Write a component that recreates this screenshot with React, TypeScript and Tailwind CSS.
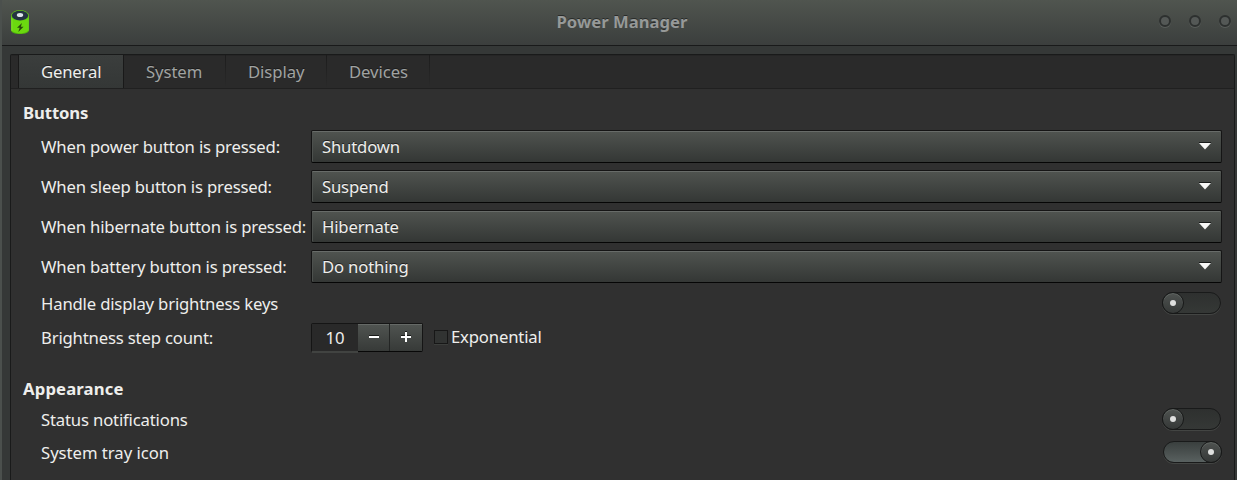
import { useState } from "react";

const selects = [
  { label: "When power button is pressed:", value: "Shutdown" },
  { label: "When sleep button is pressed:", value: "Suspend" },
  { label: "When hibernate button is pressed:", value: "Hibernate" },
  { label: "When battery button is pressed:", value: "Do nothing" },
];

const tabs = [
  { name: "General", width: "w-[106px] pl-[22px]" },
  { name: "System", width: "w-[102px] pl-[22px]" },
  { name: "Display", width: "w-[101px] pl-[22px]" },
  { name: "Devices", width: "w-[103px] pl-[22px]" },
];

function BatteryIcon() {
  return (
    <svg width="20" height="26" viewBox="0 0 20 26" className="block">
      <path d="M1 6.500v14.500c0 2.600 4 4 9 4s9-1.400 9-4V6.500z" fill="#53b80c" />
      <path d="M2.200 7v14c0 2 3.500 3.200 7.800 3.200s7.800-1.200 7.800-3.200V7z" fill="#6bd90f" />
      <path d="M1.500 8v13c0 .5.300 1 .8 1.400V9z" fill="#96f03f" />
      <path d="M18.500 8v13c0 .5-.3 1-.8 1.400V9z" fill="#7be02a" />
      <ellipse cx="10" cy="6.600" rx="9" ry="5.500" fill="#66d010" />
      <ellipse cx="10" cy="6.600" rx="8.200" ry="4.900" fill="#243442" />
      <ellipse cx="10" cy="6" rx="3.200" ry="2" fill="#dce4e8" />
      <path d="M12 14l-5 4.700h2.700L8.300 23l5.200-5.200h-2.700z" fill="#29460e" />
    </svg>
  );
}

function WindowButton() {
  return (
    <span className="block size-3 shrink-0 rounded-full border-2 border-[#2d302f] bg-[#545856] shadow-[0_1px_0_#595d5a]" />
  );
}

function Select({ value }: { value: string }) {
  return (
    <button className="flex h-[33px] w-[911px] items-center justify-between rounded-[2px] border border-[#151515] border-b-[#050505] bg-linear-to-b from-[#505450] to-[#343735] pr-[10px] pl-[10px] text-[#eeeeec] shadow-[inset_0_1px_0_#686c69,inset_1px_0_0_#4d514e] [text-shadow:0_-1px_0_#202020]">
      <span>{value}</span>
      <svg width="12" height="8" viewBox="0 0 12 8" className="mb-0.5">
        <path d="M0 0h12v1H0z" fill="#181a19" />
        <path d="M0 1h12L6 7.500z" fill="#f8f8f7" />
      </svg>
    </button>
  );
}

function Switch({ initial, label }: { initial: boolean; label: string }) {
  const [on, setOn] = useState(initial);
  return (
    <button
      role="switch"
      aria-checked={on}
      aria-label={label}
      onClick={() => setOn(!on)}
      className={
        "mb-0.5 flex h-[22px] w-[60px] items-center " + (on ? "justify-end" : "")
      }
    >
      <span
        className={
          "flex h-[22px] w-[59px] items-center rounded-full border border-[#191a1a] shadow-[0_1px_0_#434543] " +
          (on
            ? "justify-end bg-linear-to-b from-[#3a3f3e] to-[#596160]"
            : "bg-linear-to-b from-[#2e302f] to-[#353836]")
        }
      >
        <span
          className={
            "flex size-[22px] shrink-0 items-center justify-center rounded-full border border-[#171818] bg-linear-to-b from-[#4f5351] to-[#353837] shadow-[inset_0_1px_0_#616663] " +
            (on ? "-mr-px" : "-ml-px")
          }
        >
          <span className="size-1.5 rounded-full bg-[#dedfde]" />
        </span>
      </span>
    </button>
  );
}

export default function App() {
  const [active, setActive] = useState("General");
  const [count, setCount] = useState(10);
  return (
    <div className="flex h-[480px] w-[1237px] flex-col overflow-hidden bg-[#353837] font-['Noto_Sans',sans-serif] text-[16.700px] leading-6 tracking-[-0.175px] text-[#eeeeec]">
      <header className="flex h-[46px] shrink-0 border-l-2 border-[#4b504d]">
        <div className="flex flex-1 items-start border-b border-[#191a1a] bg-linear-to-b from-[#50554f] to-[#3b3e3d]">
          <div className="w-[78px] pt-[9px] pl-2">
            <BatteryIcon />
          </div>
          <h1 className="flex-1 pt-[10px] pl-[5px] text-center font-bold tracking-normal text-[#969998] [text-shadow:0_-1px_0_#292b2a]">
            Power Manager
          </h1>
          <div className="flex w-[78px] gap-[18px] pt-[15px]">
            <WindowButton />
            <WindowButton />
            <WindowButton />
          </div>
        </div>
      </header>
      <div className="flex min-h-0 flex-1 border-l-2 border-[#4b504d] pt-2 pr-0.5 pl-2">
        <main className="flex flex-1 flex-col rounded-t-[2px] border border-b-0 border-[#191a1a] bg-[#303030]">
          <nav className="flex h-[34px] shrink-0 border-b border-[#202020] bg-[#2a2a2a] pl-[7px] shadow-[inset_0_1px_0_#252525]">
            {tabs.map((tab) => (
              <button
                key={tab.name}
                onClick={() => setActive(tab.name)}
                className={
                  "relative flex h-[33px] items-center pt-px text-left " +
                  tab.width +
                  (active === tab.name
                    ? " border-x border-[#191919] bg-linear-to-b from-[#3b3e3d] to-[#343736] text-[#eeeeec] [text-shadow:0_-1px_0_#222]"
                    : " tracking-[-0.08px] text-[#a0a3a2] [text-shadow:0_-1px_0_#1b1b1b]")
                }
              >
                {tab.name}
                {active !== tab.name && (
                  <span className="absolute top-0 right-0 h-full w-px bg-linear-to-b from-[#1c1c1c] to-transparent" />
                )}
              </button>
            ))}
          </nav>
          <section className="pt-3 pr-3 pl-3">
            <h2 className="font-bold tracking-[-0.1px]">Buttons</h2>
            <div className="flex flex-col gap-[7px] pt-[5px] pl-[18px]">
              {selects.map((row) => (
                <div key={row.label} className="flex h-[33px] items-center">
                  <span className="w-[270px] shrink-0 whitespace-nowrap">{row.label}</span>
                  <Select value={row.value} />
                </div>
              ))}
            </div>
            <div className="mt-[7px] flex h-[27px] items-center justify-between pl-[18px]">
              <span>Handle display brightness keys</span>
              <Switch initial={false} label="Handle display brightness keys" />
            </div>
            <div className="mt-[6px] flex h-[30px] items-center pl-[18px]">
              <span className="w-[270px] shrink-0">Brightness step count:</span>
              <div className="mb-0.5 flex h-[29px] w-[112px] rounded-[2px] border border-[#151515] border-b-[#080808]">
                <span className="flex w-[46px] items-center justify-center bg-[#292929] pt-0.5 tracking-normal shadow-[0_2px_0_#414341]">
                  {count}
                </span>
                <button
                  aria-label="Decrease"
                  onClick={() => setCount(count - 1)}
                  className="flex w-8 items-center justify-center border-r border-[#232524] bg-linear-to-b from-[#505451] to-[#373a38] shadow-[inset_0_1px_0_#656966]"
                >
                  <svg width="12" height="12" viewBox="0 0 12 12">
                    <path d="M1 4h10v1H1z" fill="#191a19" />
                    <path d="M1 5h10v2H1z" fill="#fff" />
                  </svg>
                </button>
                <button
                  aria-label="Increase"
                  onClick={() => setCount(count + 1)}
                  className="flex w-8 items-center justify-center bg-linear-to-b from-[#505451] to-[#373a38] shadow-[inset_0_1px_0_#656966]"
                >
                  <svg width="12" height="12" viewBox="0 0 12 12">
                    <path d="M1 4h10v1H1zM5 0h2v1H5z" fill="#191a19" />
                    <path d="M5 1h2v4h4v2H7v4H5V7H1V5h4z" fill="#fff" />
                  </svg>
                </button>
              </div>
              <label className="mb-0.5 ml-[11px] flex items-center gap-[3px]">
                <span className="mb-px size-[14px] border border-[#171717] bg-[#313332] shadow-[0_1px_0_#3c3e3c]" />
                <span>Exponential</span>
              </label>
            </div>
            <h2 className="mt-6 font-bold tracking-[0.15px]">Appearance</h2>
            <div className="mt-[5px] flex h-[27px] items-center justify-between pl-[18px]">
              <span>Status notifications</span>
              <Switch initial={false} label="Status notifications" />
            </div>
            <div className="mt-[6px] flex h-[27px] items-center justify-between pl-[18px]">
              <span className="tracking-[-0.03px]">System tray icon</span>
              <Switch initial={true} label="System tray icon" />
            </div>
          </section>
        </main>
      </div>
    </div>
  );
}
